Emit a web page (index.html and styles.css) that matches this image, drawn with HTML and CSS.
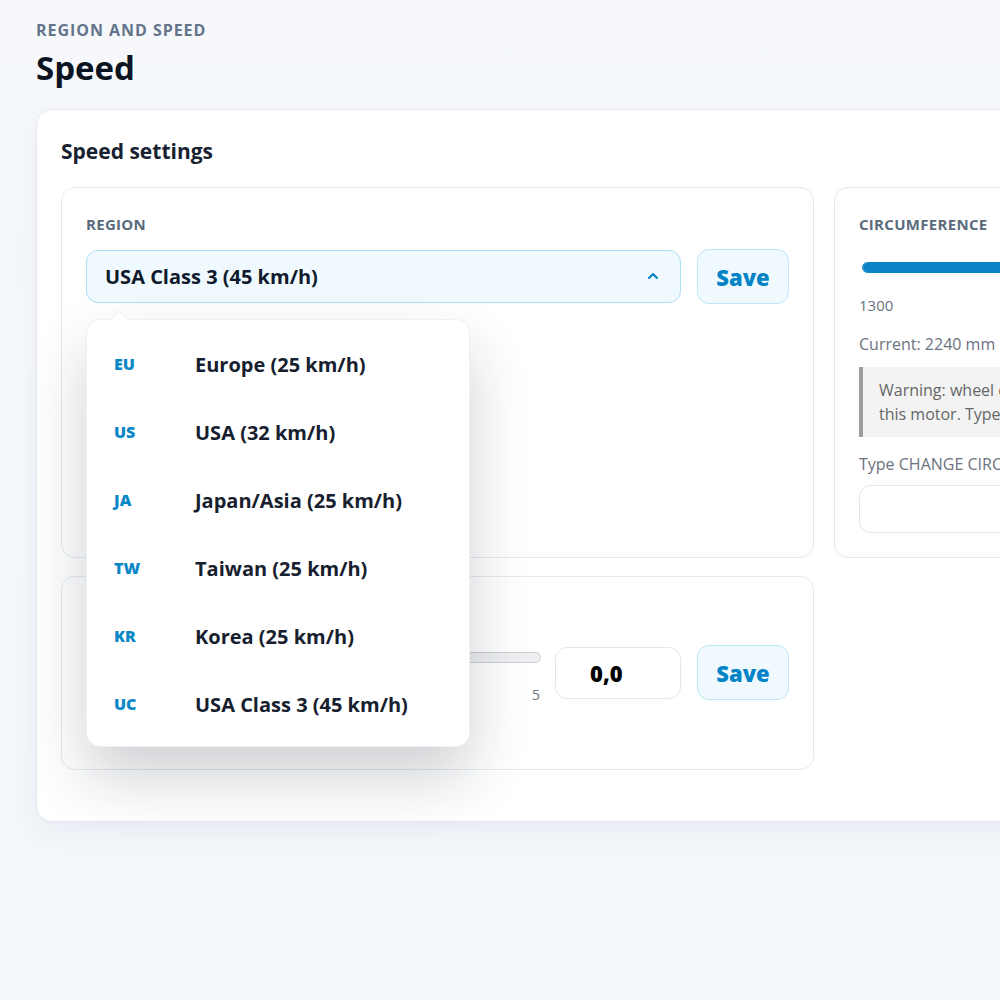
FILE: index.html
```html
<!DOCTYPE html>
<html>
<head>
	<meta charset="utf-8">
	<title>Region and speed</title>
	<link rel="stylesheet" href="styles.css">
</head>
<body>
	<main class="page">
		<p class="eyebrow">REGION AND SPEED</p>
		<h1>Speed</h1>

		<section class="card">
			<h2>Speed settings</h2>
			<div class="panels">

				<div class="panel">
					<div class="label">REGION</div>
					<div class="row">
						<div class="select open">
							<span>USA Class 3 (45 km/h)</span>
							<svg class="caret" width="14" height="14" viewBox="0 0 14 14">
								<path d="M3 9 L7 5 L11 9" fill="none" stroke="#0284c7" stroke-width="2" stroke-linecap="round" stroke-linejoin="round"/>
							</svg>
							<ul class="menu">
								<li><b>EU</b>Europe (25 km/h)</li>
								<li><b>US</b>USA (32 km/h)</li>
								<li><b>JA</b>Japan/Asia (25 km/h)</li>
								<li><b>TW</b>Taiwan (25 km/h)</li>
								<li><b>KR</b>Korea (25 km/h)</li>
								<li><b>UC</b>USA Class 3 (45 km/h)</li>
							</ul>
						</div>
						<button class="save">Save</button>
					</div>
				</div>

				<div class="panel circ">
					<div class="label">CIRCUMFERENCE</div>
					<div class="track blue"><div class="fill" style="width: 100%"></div></div>
					<div class="muted small">1300</div>
					<div class="muted current">Current: 2240 mm</div>
					<div class="warning">Warning: wheel circumference is outside the usual range for<br>this motor. Type the phrase below to confirm the change.</div>
					<div class="muted confirm">Type CHANGE CIRCUMFERENCE to confirm</div>
					<input class="text-input" type="text">
				</div>

				<div class="panel offset">
					<div class="label">SPEED OFFSET</div>
					<div class="row">
						<div class="slider">
							<div class="track"><div class="fill" style="width: 0%"></div></div>
							<div class="scale"><span>0</span><span>5</span></div>
						</div>
						<input class="number" type="text" value="0,0">
						<button class="save">Save</button>
					</div>
				</div>

			</div>
		</section>
	</main>
</body>
</html>
```

FILE: styles.css
```css
html, body {
	margin: 0;
	overflow: hidden;
}
body {
	font-family: "Open Sans", "Noto Sans", sans-serif;
	background: linear-gradient(#f6f8fb, #f3f7fc);
	color: #0f1b2d;
	min-height: 100vh;
}
.page {
	padding: 19px 0 0 36px;
	width: 1400px;
}
.eyebrow {
	margin: 0;
	font-size: 16px;
	font-weight: 700;
	letter-spacing: 0.06em;
	color: #64748b;
}
h1 {
	margin: 4px 0 19px;
	font-size: 33px;
	font-weight: 700;
	color: #0b1422;
}
.card {
	background: #fff;
	border: 1px solid #e4e8ee;
	border-radius: 16px;
	padding: 27px 24px 51px;
	box-shadow: 0 10px 30px rgba(15, 23, 42, 0.05);
}
.card h2 {
	margin: 0 0 22px;
	font-size: 21px;
	font-weight: 700;
	color: #17212f;
}
.panels {
	display: grid;
	grid-template-columns: 753px 480px;
	gap: 18px 20px;
}
.panel {
	border: 1px solid #e5e9ef;
	border-radius: 14px;
	padding: 26px 24px 24px;
}
.label {
	font-size: 15px;
	font-weight: 700;
	letter-spacing: 0.02em;
	color: #5b6b7d;
	margin-bottom: 15px;
}
.row {
	display: flex;
	align-items: center;
	gap: 16px;
}

/* region select, shown open */
.select {
	position: relative;
	flex: 1;
	height: 51px;
	display: flex;
	align-items: center;
	justify-content: space-between;
	padding: 0 20px 0 18px;
	background: #f0f9fe;
	border: 1px solid #a9def4;
	border-radius: 12px;
	font-size: 20px;
	font-weight: 700;
}
.caret {
	margin-top: -2px;
}
.menu {
	position: absolute;
	top: calc(100% + 17px);
	left: -1px;
	width: 382px;
	margin: 0;
	padding: 10px 0 8px;
	list-style: none;
	background: #fff;
	border: 1px solid #eef1f4;
	border-radius: 14px;
	box-shadow: 0 30px 60px rgba(15, 23, 42, 0.2);
	z-index: 2;
}
.menu::before {
	content: "";
	position: absolute;
	top: -7px;
	left: 26px;
	width: 12px;
	height: 12px;
	background: #fff;
	border-left: 1px solid #eef1f4;
	border-top: 1px solid #eef1f4;
	transform: rotate(45deg);
}
.menu li {
	display: flex;
	align-items: center;
	height: 68px;
	padding-left: 27px;
	font-size: 20px;
	font-weight: 700;
	color: #17202e;
}
.menu li b {
	width: 81px;
	font-size: 16px;
	font-weight: 800;
	color: #0a87c6;
}
.save {
	width: 92px;
	height: 55px;
	background: #f0f9fe;
	border: 1px solid #bde6f8;
	border-radius: 12px;
	font-family: inherit;
	font-size: 22px;
	font-weight: 800;
	color: #0284c7;
}

/* circumference panel */
.circ {
	color: #6b7280;
}
.track {
	height: 9px;
	border: 1px solid #c9cdd2;
	border-radius: 6px;
	background: #eeeff1;
	overflow: hidden;
}
.track.blue {
	margin: 28px 0 0 3px;
	border-color: #0a84c6;
}
.fill {
	height: 100%;
	background: #0a84c6;
}
.muted {
	font-size: 16px;
	color: #6b7280;
}
.muted.small {
	font-size: 15px;
	margin-top: 22px;
}
.current {
	margin-top: 18px;
}
.warning {
	margin-top: 12px;
	padding: 11px 16px;
	background: #f3f3f3;
	border-left: 4px solid #9e9e9e;
	font-size: 16px;
	line-height: 24px;
	color: #666;
	white-space: nowrap;
}
.confirm {
	margin-top: 16px;
}
.text-input {
	display: block;
	box-sizing: border-box;
	width: 100%;
	height: 48px;
	margin-top: 10px;
	border: 1px solid #e2e8f0;
	border-radius: 12px;
}

/* offset slider row */
.offset {
	padding-bottom: 65px;
}
.offset .label {
	margin-bottom: 18px;
}
.slider {
	flex: 1;
	padding-top: 11px;
	margin-right: -2px;
}
.scale {
	display: flex;
	justify-content: space-between;
	margin-top: 22px;
	padding-right: 1px;
	font-size: 14px;
	line-height: 19px;
	color: #6b7280;
}
.number {
	width: 126px;
	height: 52px;
	box-sizing: border-box;
	border: 1px solid #e2e8f0;
	border-radius: 12px;
	padding: 0 0 0 34px;
	font-family: inherit;
	font-size: 22px;
	font-weight: 800;
	color: #000;
}
```
